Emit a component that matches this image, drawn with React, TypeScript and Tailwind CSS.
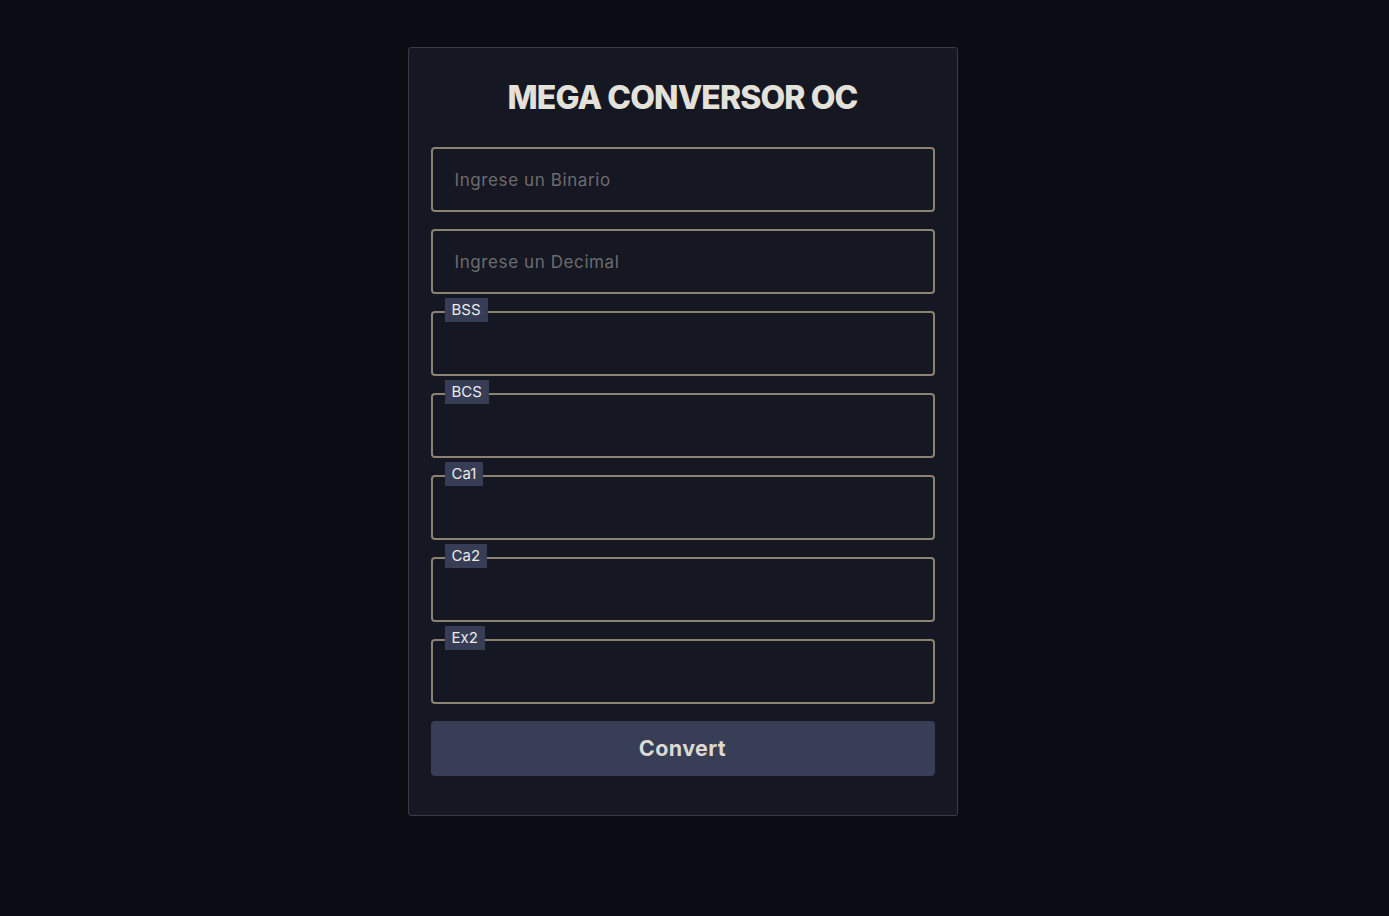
const fields = ["BSS", "BCS", "Ca1", "Ca2", "Ex2"];

const Field = ({ label, placeholder }: { label?: string; placeholder?: string }) => (
  <div className="relative">
    {label && (
      <span className="absolute left-[14px] top-[-13px] bg-[#363d55] px-[7px] h-[24px] flex items-center text-[15px] text-[#ecebe8]">
        {label}
      </span>
    )}
    <input
      type="text"
      placeholder={placeholder}
      className="w-full h-[65px] rounded-[4px] border-2 border-[#8c8272] bg-[#151722] px-[22px] text-[17px] tracking-[0.6px] text-[#e4e0d8] placeholder:text-[#6c6c6e] outline-none"
    />
  </div>
);

export default function App() {
  return (
    <div className="min-h-screen bg-[#0b0c14] pt-[47px] pr-[24px] font-['Inter','Noto_Sans',sans-serif]">
      <div className="mx-auto w-[550px] rounded-[3px] border border-[#393a44] bg-[#151722] px-[22px] pt-[30px] pb-[39px]">
        <h1 className="text-center text-[32px] leading-[40px] font-extrabold tracking-[-0.9px] text-[#e4e1da]">
          MEGA CONVERSOR OC
        </h1>
        <div className="mt-[29px] flex flex-col gap-[17px]">
          <Field placeholder="Ingrese un Binario" />
          <Field placeholder="Ingrese un Decimal" />
          {fields.map((f) => (
            <Field key={f} label={f} />
          ))}
          <button className="h-[55px] rounded-[4px] bg-[#373e56] text-[21.5px] font-bold tracking-[0.4px] text-[#ddd9d2]">
            Convert
          </button>
        </div>
      </div>
    </div>
  );
}
